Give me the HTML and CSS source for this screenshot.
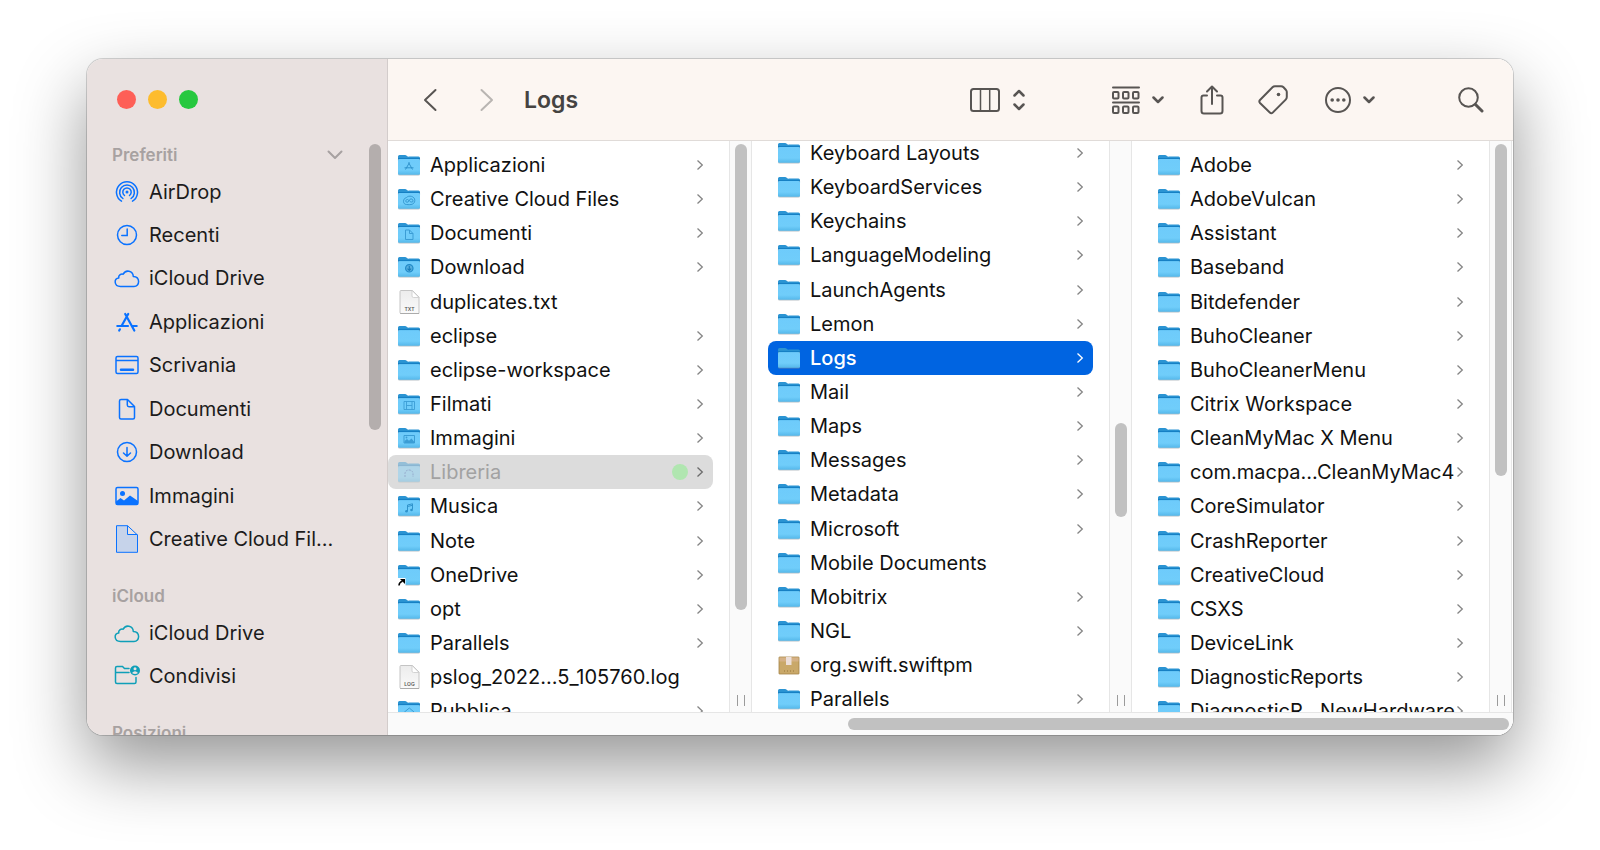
FILE: index.html
```html
<!DOCTYPE html>
<html lang="it">
<head>
    <meta charset="UTF-8">
    <meta name="viewport" content="width=device-width, initial-scale=1.0">
    <title>Logs</title>
    <link rel="stylesheet" href="styles.css">
</head>
<body>
    <!-- Shared icons -->
    <svg class="defs" aria-hidden="true">
        <defs>
            <linearGradient id="folder-front" x1="0" y1="0" x2="0" y2="1">
                <stop offset="0" stop-color="#6ecbfb"/>
                <stop offset="0.7" stop-color="#70cdfa"/>
                <stop offset="1" stop-color="#55b8ea"/>
            </linearGradient>
            <linearGradient id="page-fill" x1="0" y1="0" x2="0" y2="1">
                <stop offset="0" stop-color="#ececec"/>
                <stop offset="1" stop-color="#fafafa"/>
            </linearGradient>
        </defs>
        <symbol id="folder" viewBox="0 0 24 24">
            <path d="M1 3.500Q1 2 2.500 2H8Q9 2 10 3T12 3.500H21.500Q23 3.500 23 5V20H1Z" fill="#2b94d3"/>
            <rect x="1" y="5" width="22" height="17.500" rx="1.500" fill="#8a98a0" opacity="0.6"/>
            <rect x="1" y="6" width="22" height="15.800" rx="1.500" fill="url(#folder-front)"/>
            <path d="M1 5.500H23" stroke="#1680c4" stroke-width="1.200"/>
        </symbol>
        <symbol id="file" viewBox="0 0 24 24">
            <path d="M4 0.500H15.500L22 7V23.500H4Q3 23.500 3 22.500V1.500Q3 0.500 4 0.500Z" fill="url(#page-fill)" stroke="#c4c4c4"/>
            <path d="M15 0.500V6Q15 7.500 16.500 7.500H22Z" fill="#fff" stroke="#c9c9c9" stroke-width="0.800"/>
            <path d="M3 23.700H22" stroke="#9a9a9a" stroke-width="0.700"/>
        </symbol>
        <symbol id="box" viewBox="0 0 24 24">
            <rect x="2" y="4" width="20" height="17" rx="0.500" fill="#c9a869" stroke="#a58346" stroke-width="0.800"/>
            <rect x="2.500" y="4.500" width="19" height="4" fill="#d5b186"/>
            <rect x="9" y="4" width="5.500" height="8" fill="#ecdfda"/>
            <path d="M7 18H17" stroke="#96763c" stroke-dasharray="1 2"/>
        </symbol>
        <symbol id="g-apps" viewBox="0 0 24 24"><path d="M12.500 9.500L8.500 16.500M11.500 9.500L15.500 16.500M7.500 14.800H16.500" fill="none" stroke="#2f93cc"/></symbol>
        <symbol id="g-cc" viewBox="0 0 24 24"><path d="M9.500 17.500C5.500 17.500 5.500 11.500 9.500 10.500C11.500 8 18 9 17.800 13.500C17.600 17.500 14 18 9.500 17.500M15.500 15C13 16 12 12.500 10.500 12.500C8.500 12.500 8 15 10 15.300C12 15.500 12 12 14 11.800C16 12 16.500 14 15.500 15" fill="none" stroke="#2f93cc" stroke-width="0.900"/></symbol>
        <symbol id="g-doc" viewBox="0 0 24 24"><path d="M8.500 9H12.500L16 12.500V18.500H8.500ZM12.500 9V12.500H16" fill="none" stroke="#3b9dd5"/></symbol>
        <symbol id="g-down" viewBox="0 0 24 24"><circle cx="12.300" cy="13.300" r="3.700" fill="#56aede" stroke="#2189c7" stroke-width="1.200"/><path d="M12.300 11V15.300M10.500 13.700L12.300 15.500L14.100 13.700" fill="none" stroke="#1a7dba" stroke-width="1.100"/></symbol>
        <symbol id="g-film" viewBox="0 0 24 24"><path d="M7 9.500H17.500V17.500H7ZM9.500 9.500V17.500M15 9.500V17.500M9.500 13.500H15" fill="none" stroke="#3b9dd5" stroke-width="0.900"/></symbol>
        <symbol id="g-image" viewBox="0 0 24 24"><path d="M7 9.500H17.500V17H7Z" fill="none" stroke="#3b9dd5"/><path d="M7.500 17V15L10 13L12 14.800L14.500 12.500L17 15.500V17Z" fill="#3b9dd5"/><circle cx="9.500" cy="11.500" r="0.900" fill="#3b9dd5"/></symbol>
        <symbol id="g-lib" viewBox="0 0 24 24"><path d="M8 17V13.500Q8.500 10 12 10T16 13.500V17" fill="none" stroke="#2f63b8" stroke-dasharray="2 1"/></symbol>
        <symbol id="g-music" viewBox="0 0 24 24"><path d="M10.500 17V11L15.500 9.800V15.500M10.500 12.500L15.500 11.300" fill="none" stroke="#2f93cc"/><circle cx="9.500" cy="17.300" r="1.300" fill="#2f93cc"/><circle cx="14.500" cy="16" r="1.300" fill="#2f93cc"/></symbol>
        <symbol id="g-public" viewBox="0 0 24 24"><path d="M7.500 13L12.300 9L17 13L12.300 17Z" fill="none" stroke="#3b9dd5"/></symbol>
        <symbol id="g-alias" viewBox="0 0 24 24"><rect x="1" y="15" width="7.500" height="8.500" fill="#fff"/><path d="M2 22.500Q2 19.500 5.500 18" fill="none" stroke="#000" stroke-width="1.500"/><path d="M3 16H8V21Z" fill="#000"/></symbol>
        <symbol id="chev" viewBox="0 0 8 12"><path d="M1.500 1.500L6.300 6L1.500 10.500" fill="none" stroke="currentColor" stroke-width="1.300"/></symbol>
        <symbol id="down" viewBox="0 0 12 8"><path d="M1.500 1.500L6 6L10.500 1.500" fill="none" stroke="currentColor" stroke-width="2.500" stroke-linecap="round" stroke-linejoin="round"/></symbol>
        <symbol id="cloud" viewBox="0 0 26 26"><path d="M6.500 21.500C-0.300 21.500 -0.300 13 4.800 13C4 10.500 7 8.300 9.200 9.200C11.500 4.300 19 5.500 19.300 11.500C26.500 11.800 26 21.500 20 21.500Z" fill="none" stroke="currentColor" stroke-width="1.500" stroke-linejoin="round"/></symbol>
    </svg>

    <main class="window">
        <nav class="sidebar">
            <div class="lights">
                <button class="light red" aria-label="Chiudi"></button>
                <button class="light yellow" aria-label="Riduci"></button>
                <button class="light green" aria-label="Ingrandisci"></button>
            </div>
            <div class="sidebar-body">
                <div class="places">
                    <h2>Preferiti
                        <svg width="16" height="10" viewBox="0 0 16 10"><path d="M1.500 1.500L8 8L14.500 1.500" fill="none" stroke="currentColor" stroke-width="2" stroke-linecap="round" stroke-linejoin="round"/></svg>
                    </h2>
                    <ul>
                        <li><a href="#">
                            <svg viewBox="0 0 26 26" fill="none" stroke="currentColor" stroke-width="1.500" stroke-linecap="round"><circle cx="13" cy="13" r="1.500" fill="currentColor" stroke="none"/><path d="M10.500 16.500A4.200 4.200 0 1 1 15.500 16.500M8.900 19.500A7.400 7.400 0 1 1 17.100 19.500M7.500 22.200A10.500 10.500 0 1 1 18.500 22.200"/></svg>
                            AirDrop</a></li>
                        <li><a href="#">
                            <svg viewBox="0 0 26 26" fill="none" stroke="currentColor" stroke-width="1.500" stroke-linecap="round"><circle cx="13" cy="13" r="9.500"/><path d="M13.200 7V13.500H7.800"/></svg>
                            Recenti</a></li>
                        <li><a href="#">
                            <svg><use href="#cloud"/></svg>
                            iCloud Drive</a></li>
                        <li><a href="#">
                            <svg viewBox="0 0 26 26" fill="none" stroke="currentColor" stroke-width="2.200" stroke-linecap="round"><path d="M14.200 5L7.800 16.500M11.200 5L20.300 21.500M3.300 17H14M18.500 17H22.700M5.900 20.300L5.200 21.500"/></svg>
                            Applicazioni</a></li>
                        <li><a href="#">
                            <svg viewBox="0 0 26 26" fill="none" stroke="currentColor" stroke-width="1.500"><rect x="2" y="4.500" width="22" height="17" rx="1.500"/><path d="M2 8.500H24"/><path d="M7 17.800H19" stroke-width="2.500" stroke-linecap="round"/></svg>
                            Scrivania</a></li>
                        <li><a href="#">
                            <svg viewBox="0 0 26 26" fill="none" stroke="currentColor" stroke-width="1.500" stroke-linejoin="round"><path d="M7 3.500H13.500L20.500 10.500V21.500Q20.500 23 19 23H7Q5.500 23 5.500 21.500V5Q5.500 3.500 7 3.500ZM13.300 3.800V9Q13.300 10.700 15 10.700H20.300"/></svg>
                            Documenti</a></li>
                        <li><a href="#">
                            <svg viewBox="0 0 26 26" fill="none" stroke="currentColor" stroke-width="1.500" stroke-linecap="round" stroke-linejoin="round"><circle cx="13" cy="13" r="9.500"/><path d="M13 8.500V17M9.500 14L13 17.300L16.500 14"/></svg>
                            Download</a></li>
                        <li><a href="#">
                            <svg viewBox="0 0 26 26"><rect x="2" y="4.500" width="22" height="17" rx="1.500" fill="none" stroke="currentColor" stroke-width="1.500"/><path d="M2 18.500L6.500 15L10 17.500L16 12.500L24 18V21.500H2Z" fill="currentColor"/><circle cx="8.500" cy="10.500" r="2.500" fill="currentColor"/></svg>
                            Immagini</a></li>
                        <li><a href="#">
                            <svg viewBox="0 0 26 28"><path d="M2.500 0.700H13.500L23.500 10.500V27.300H2.500Z" fill="#c6d3ea"/><path d="M13.500 0.700L23.500 9.500H13.500Z" fill="#e9e1e0"/><path d="M2.500 0.700H13.500L23.500 10V27.300H2.500ZM13.500 0.700V9.500H23.500" fill="none" stroke="currentColor"/></svg>
                            Creative Cloud Fil...</a></li>
                    </ul>
                    <h2>iCloud</h2>
                    <ul class="teal">
                        <li><a href="#">
                            <svg><use href="#cloud"/></svg>
                            iCloud Drive</a></li>
                        <li><a href="#">
                            <svg viewBox="0 0 26 26"><path d="M15 5.500H10.500L8.500 3.500H3Q1.500 3.500 1.500 5V19Q1.500 20.500 3 20.500H20.500Q22 20.500 22 19V14.500M1.500 9.500H15" fill="none" stroke="currentColor" stroke-width="1.500" stroke-linecap="round"/><circle cx="21" cy="7.500" r="5" fill="currentColor"/><circle cx="21" cy="5.700" r="1.500" fill="#e9e1e0"/><path d="M18 10Q21 6.500 24 10Q21 12 18 10Z" fill="#e9e1e0"/></svg>
                            Condivisi</a></li>
                    </ul>
                    <h2>Posizioni</h2>
                </div>
                <div class="thumb thumb-places"></div>
            </div>
        </nav>

        <section class="content">
            <header class="toolbar">
                <div class="nav-buttons">
                    <button aria-label="Indietro"><svg width="14" height="24" viewBox="0 0 14 24"><path d="M12.500 2L2 12L12.500 22"/></svg></button>
                    <button class="dim" aria-label="Avanti"><svg width="14" height="24" viewBox="0 0 14 24"><path d="M1.500 2L12 12L1.500 22"/></svg></button>
                </div>
                <h1>Logs</h1>
                <div class="tools">
                    <button class="tool-view" aria-label="Vista">
                        <svg width="30" height="26" viewBox="0 0 30 26"><rect x="1" y="2" width="28" height="22" rx="2.500"/><path d="M10.500 2V24M19.700 2V24" stroke-width="1.500"/></svg>
                        <svg width="12" height="22" viewBox="0 0 12 22"><path d="M1.500 6.500L6 2L10.500 6.500M1.500 15.500L6 20L10.500 15.500" stroke-width="2.500"/></svg>
                    </button>
                    <button class="tool-group" aria-label="Raggruppa">
                        <svg width="28" height="28" viewBox="0 0 28 28"><path d="M1 1.500H27M1 16.500H27"/><rect x="1" y="6" width="5.500" height="6.500" rx="1"/><rect x="11" y="6" width="5.500" height="6.500" rx="1"/><rect x="21" y="6" width="5.500" height="6.500" rx="1"/><rect x="1" y="20.500" width="5.500" height="6.500" rx="1"/><rect x="11" y="20.500" width="5.500" height="6.500" rx="1"/><rect x="21" y="20.500" width="5.500" height="6.500" rx="1"/></svg>
                        <svg width="12" height="8"><use href="#down"/></svg>
                    </button>
                    <button class="tool-share" aria-label="Condividi">
                        <svg width="24" height="30" viewBox="0 0 24 30"><path d="M7 10.500H3.500Q1.500 10.500 1.500 12.500V26Q1.500 28.500 4 28.500H20Q22.500 28.500 22.500 26V12.500Q22.500 10.500 20.500 10.500H17M12 19V2M7 6.500L12 1.500L17 6.500"/></svg>
                    </button>
                    <button class="tool-tag" aria-label="Tag">
                        <svg width="30" height="30" viewBox="0 0 30 30"><path d="M14.500 2.300Q15.500 1.300 17 1.300H23Q24.500 1.300 25.500 2.300L28 5Q28.800 6 28.800 7V12Q28.800 13.500 27.700 14.600L14.700 27.600Q13.300 29 11.800 27.500L2 18Q0.700 16.500 2 15Z"/><circle cx="20.500" cy="9.500" r="1.800" fill="currentColor" stroke="none"/></svg>
                    </button>
                    <button class="tool-more" aria-label="Azioni">
                        <svg width="26" height="26" viewBox="0 0 26 26"><circle cx="13" cy="13" r="12"/><g fill="currentColor" stroke="none"><circle cx="7.200" cy="13" r="1.800"/><circle cx="13" cy="13" r="1.800"/><circle cx="18.800" cy="13" r="1.800"/></g></svg>
                        <svg width="12" height="8"><use href="#down"/></svg>
                    </button>
                    <button aria-label="Cerca">
                        <svg width="26" height="26" viewBox="0 0 26 26"><circle cx="10.500" cy="10.500" r="9.300"/><path d="M17.500 17.500L24 24" stroke-width="3"/></svg>
                    </button>
                </div>
            </header>

            <div class="columns">
                <div class="column column-first">
                    <ul class="list">
                        <li><a href="#"><svg><use href="#folder"/><use href="#g-apps"/></svg><span>Applicazioni</span><svg class="chev"><use href="#chev"/></svg></a></li>
                        <li><a href="#"><svg><use href="#folder"/><use href="#g-cc"/></svg><span>Creative Cloud Files</span><svg class="chev"><use href="#chev"/></svg></a></li>
                        <li><a href="#"><svg><use href="#folder"/><use href="#g-doc"/></svg><span>Documenti</span><svg class="chev"><use href="#chev"/></svg></a></li>
                        <li><a href="#"><svg><use href="#folder"/><use href="#g-down"/></svg><span>Download</span><svg class="chev"><use href="#chev"/></svg></a></li>
                        <li><a href="#"><svg viewBox="0 0 24 24"><use href="#file"/><text x="12.500" y="20.500">TXT</text></svg><span>duplicates.txt</span></a></li>
                        <li><a href="#"><svg><use href="#folder"/></svg><span>eclipse</span><svg class="chev"><use href="#chev"/></svg></a></li>
                        <li><a href="#"><svg><use href="#folder"/></svg><span>eclipse-workspace</span><svg class="chev"><use href="#chev"/></svg></a></li>
                        <li><a href="#"><svg><use href="#folder"/><use href="#g-film"/></svg><span>Filmati</span><svg class="chev"><use href="#chev"/></svg></a></li>
                        <li><a href="#"><svg><use href="#folder"/><use href="#g-image"/></svg><span>Immagini</span><svg class="chev"><use href="#chev"/></svg></a></li>
                        <li><a href="#" class="open"><svg><use href="#folder"/><use href="#g-lib"/></svg><span>Libreria</span><i class="dot"></i><svg class="chev"><use href="#chev"/></svg></a></li>
                        <li><a href="#"><svg><use href="#folder"/><use href="#g-music"/></svg><span>Musica</span><svg class="chev"><use href="#chev"/></svg></a></li>
                        <li><a href="#"><svg><use href="#folder"/></svg><span>Note</span><svg class="chev"><use href="#chev"/></svg></a></li>
                        <li><a href="#"><svg><use href="#folder"/><use href="#g-alias"/></svg><span>OneDrive</span><svg class="chev"><use href="#chev"/></svg></a></li>
                        <li><a href="#"><svg><use href="#folder"/></svg><span>opt</span><svg class="chev"><use href="#chev"/></svg></a></li>
                        <li><a href="#"><svg><use href="#folder"/></svg><span>Parallels</span><svg class="chev"><use href="#chev"/></svg></a></li>
                        <li><a href="#"><svg viewBox="0 0 24 24"><use href="#file"/><text x="12.500" y="20.500">LOG</text></svg><span>pslog_2022...5_105760.log</span></a></li>
                        <li><a href="#"><svg><use href="#folder"/><use href="#g-public"/></svg><span>Pubblica</span><svg class="chev"><use href="#chev"/></svg></a></li>
                    </ul>
                    <div class="track"><div class="thumb thumb-first"></div><div class="grip"></div></div>
                </div>

                <div class="column column-scrolled">
                    <ul class="list">
                        <li><a href="#"><svg><use href="#folder"/></svg><span>Keyboard Layouts</span><svg class="chev"><use href="#chev"/></svg></a></li>
                        <li><a href="#"><svg><use href="#folder"/></svg><span>KeyboardServices</span><svg class="chev"><use href="#chev"/></svg></a></li>
                        <li><a href="#"><svg><use href="#folder"/></svg><span>Keychains</span><svg class="chev"><use href="#chev"/></svg></a></li>
                        <li><a href="#"><svg><use href="#folder"/></svg><span>LanguageModeling</span><svg class="chev"><use href="#chev"/></svg></a></li>
                        <li><a href="#"><svg><use href="#folder"/></svg><span>LaunchAgents</span><svg class="chev"><use href="#chev"/></svg></a></li>
                        <li><a href="#"><svg><use href="#folder"/></svg><span>Lemon</span><svg class="chev"><use href="#chev"/></svg></a></li>
                        <li><a href="#" class="selected"><svg><use href="#folder"/></svg><span>Logs</span><svg class="chev"><use href="#chev"/></svg></a></li>
                        <li><a href="#"><svg><use href="#folder"/></svg><span>Mail</span><svg class="chev"><use href="#chev"/></svg></a></li>
                        <li><a href="#"><svg><use href="#folder"/></svg><span>Maps</span><svg class="chev"><use href="#chev"/></svg></a></li>
                        <li><a href="#"><svg><use href="#folder"/></svg><span>Messages</span><svg class="chev"><use href="#chev"/></svg></a></li>
                        <li><a href="#"><svg><use href="#folder"/></svg><span>Metadata</span><svg class="chev"><use href="#chev"/></svg></a></li>
                        <li><a href="#"><svg><use href="#folder"/></svg><span>Microsoft</span><svg class="chev"><use href="#chev"/></svg></a></li>
                        <li><a href="#"><svg><use href="#folder"/></svg><span>Mobile Documents</span></a></li>
                        <li><a href="#"><svg><use href="#folder"/></svg><span>Mobitrix</span><svg class="chev"><use href="#chev"/></svg></a></li>
                        <li><a href="#"><svg><use href="#folder"/></svg><span>NGL</span><svg class="chev"><use href="#chev"/></svg></a></li>
                        <li><a href="#"><svg><use href="#box"/></svg><span>org.swift.swiftpm</span></a></li>
                        <li><a href="#"><svg><use href="#folder"/></svg><span>Parallels</span><svg class="chev"><use href="#chev"/></svg></a></li>
                    </ul>
                    <div class="track"><div class="thumb thumb-second"></div><div class="grip"></div></div>
                </div>

                <div class="column">
                    <ul class="list">
                        <li><a href="#"><svg><use href="#folder"/></svg><span>Adobe</span><svg class="chev"><use href="#chev"/></svg></a></li>
                        <li><a href="#"><svg><use href="#folder"/></svg><span>AdobeVulcan</span><svg class="chev"><use href="#chev"/></svg></a></li>
                        <li><a href="#"><svg><use href="#folder"/></svg><span>Assistant</span><svg class="chev"><use href="#chev"/></svg></a></li>
                        <li><a href="#"><svg><use href="#folder"/></svg><span>Baseband</span><svg class="chev"><use href="#chev"/></svg></a></li>
                        <li><a href="#"><svg><use href="#folder"/></svg><span>Bitdefender</span><svg class="chev"><use href="#chev"/></svg></a></li>
                        <li><a href="#"><svg><use href="#folder"/></svg><span>BuhoCleaner</span><svg class="chev"><use href="#chev"/></svg></a></li>
                        <li><a href="#"><svg><use href="#folder"/></svg><span>BuhoCleanerMenu</span><svg class="chev"><use href="#chev"/></svg></a></li>
                        <li><a href="#"><svg><use href="#folder"/></svg><span>Citrix Workspace</span><svg class="chev"><use href="#chev"/></svg></a></li>
                        <li><a href="#"><svg><use href="#folder"/></svg><span>CleanMyMac X Menu</span><svg class="chev"><use href="#chev"/></svg></a></li>
                        <li><a href="#"><svg><use href="#folder"/></svg><span>com.macpa...CleanMyMac4</span><svg class="chev"><use href="#chev"/></svg></a></li>
                        <li><a href="#"><svg><use href="#folder"/></svg><span>CoreSimulator</span><svg class="chev"><use href="#chev"/></svg></a></li>
                        <li><a href="#"><svg><use href="#folder"/></svg><span>CrashReporter</span><svg class="chev"><use href="#chev"/></svg></a></li>
                        <li><a href="#"><svg><use href="#folder"/></svg><span>CreativeCloud</span><svg class="chev"><use href="#chev"/></svg></a></li>
                        <li><a href="#"><svg><use href="#folder"/></svg><span>CSXS</span><svg class="chev"><use href="#chev"/></svg></a></li>
                        <li><a href="#"><svg><use href="#folder"/></svg><span>DeviceLink</span><svg class="chev"><use href="#chev"/></svg></a></li>
                        <li><a href="#"><svg><use href="#folder"/></svg><span>DiagnosticReports</span><svg class="chev"><use href="#chev"/></svg></a></li>
                        <li><a href="#"><svg><use href="#folder"/></svg><span>DiagnosticR...NewHardware</span><svg class="chev"><use href="#chev"/></svg></a></li>
                    </ul>
                    <div class="track"><div class="thumb thumb-third"></div><div class="grip"></div></div>
                </div>
            </div>

            <div class="bottom-bar"><div class="thumb-h"></div></div>
        </section>
    </main>
</body>
</html>
```
FILE: styles.css
```css
* {
    box-sizing: border-box;
}
body {
    margin: 0;
    padding: 59px 87px 115px;
    height: 100vh;
    overflow: hidden;
    background-color: #fff;
    color: #111;
    font-family: Inter, "Liberation Sans", sans-serif;
    font-size: 20px;
}
ul {
    list-style: none;
    margin: 0;
    padding: 0;
}
a {
    color: inherit;
    text-decoration: none;
}
button {
    display: flex;
    align-items: center;
    padding: 0;
    border: 0;
    background: none;
    color: inherit;
}
.defs {
    position: absolute;
    width: 0;
    height: 0;
}

/* window */
.window {
    display: flex;
    height: 100%;
    border-radius: 16px;
    overflow: hidden;
    box-shadow: 0 0 0 1px rgba(0, 0, 0, 0.16), 0 30px 70px rgba(0, 0, 0, 0.42);
}

/* sidebar */
.sidebar {
    display: flex;
    flex-direction: column;
    flex: 0 0 301px;
    background-color: #e9e1e0;
    border-right: 1px solid #d3cccb;
}
.lights {
    display: flex;
    align-items: center;
    gap: 12px;
    flex: 0 0 81px;
    padding-left: 30px;
}
.light {
    width: 19px;
    height: 19px;
    border-radius: 50%;
}
.red {
    background-color: #fe5f57;
}
.yellow {
    background-color: #fdbc2e;
}
.green {
    background-color: #27c83f;
}
.sidebar-body {
    display: flex;
    flex: 1;
    min-height: 0;
    padding: 0 6px 0 25px;
}
.places {
    flex: 1;
}
.places h2 {
    display: flex;
    align-items: center;
    justify-content: space-between;
    height: 30px;
    margin: 0;
    padding-right: 26px;
    color: #a7a1a1;
    font-size: 17px;
    font-weight: 600;
}
.places ul {
    margin-bottom: 21px;
}
.places li:nth-child(2n+3) {
    margin-bottom: 1px;
}
.places a {
    display: flex;
    align-items: center;
    gap: 9px;
    height: 43px;
    padding-left: 2px;
    color: #1c1b1b;
    white-space: nowrap;
}
.places a svg {
    flex-shrink: 0;
    width: 26px;
    height: 28px;
    color: #0a72ff;
    overflow: visible;
}
.places .teal svg {
    color: #0f9fb8;
}

/* scroll bars */
.thumb {
    width: 12px;
    border-radius: 6px;
    background-color: #c1c1c1;
}
.thumb-places {
    height: 48%;
    margin-top: 4px;
    background-color: #b4aead;
}
.thumb-first {
    height: 83%;
}
.thumb-second {
    height: 94px;
    margin-top: 279px;
}
.thumb-third {
    height: 59%;
}
.track {
    display: flex;
    flex-direction: column;
    align-items: center;
    flex: 0 0 23px;
    padding: 3px 0 6px;
    border: solid #e6e6e6;
    border-width: 0 1px;
    background-color: #fafafa;
}
.grip {
    width: 8px;
    height: 11px;
    margin-top: auto;
    border: solid #9b9b9b;
    border-width: 0 1px;
}

/* toolbar */
.content {
    display: flex;
    flex-direction: column;
    flex: 1;
    min-width: 0;
    background-color: #fff;
}
.toolbar {
    display: flex;
    align-items: center;
    flex: 0 0 82px;
    padding: 0 29px 0 35px;
    border-bottom: 1px solid #e0dbd8;
    background-color: #fcf6f2;
    color: #585553;
}
.toolbar svg {
    fill: none;
    stroke: currentColor;
    stroke-width: 2px;
    stroke-linecap: round;
    stroke-linejoin: round;
}
.nav-buttons {
    display: flex;
    gap: 43px;
}
.dim {
    color: #b9b5b2;
}
.toolbar h1 {
    margin: 0 0 0 30px;
    color: #454341;
    font-size: 23px;
    font-weight: 600;
}
.tools {
    display: flex;
    align-items: center;
    margin-left: auto;
}
.tools button {
    gap: 12px;
}
.tools .tool-view {
    gap: 13px;
    margin-right: 87px;
}
.tool-group {
    margin-right: 36px;
}
.tool-share {
    margin-right: 34px;
}
.tool-tag {
    margin-right: 37px;
}
.tool-more {
    margin-right: 83px;
}

/* columns */
.columns {
    display: flex;
    flex: 1;
    min-height: 0;
    padding-right: 1px;
}
.column {
    display: flex;
    flex: 380 1 0;
    min-width: 0;
    overflow: hidden;
}
.column-first {
    flex-grow: 364;
}
.list {
    flex: 1;
    min-width: 0;
    padding: 7px 16px 0;
}
.column-first .list {
    padding-left: 0;
}
.column-scrolled .list {
    margin-top: -12px;
}
/* an extra pixel every seventh row */
.list li:nth-child(7n+4) {
    margin-bottom: 1px;
}
.list a {
    display: flex;
    align-items: center;
    height: 34px;
    padding: 0 9px;
    border-radius: 8px;
    color: #111;
    white-space: nowrap;
}
.list svg {
    flex-shrink: 0;
    width: 24px;
    height: 24px;
}
.list span {
    flex: 1;
    margin-left: 9px;
}
.list text {
    fill: #555;
    font-size: 5px;
    font-weight: 600;
    text-anchor: middle;
}
.list .chev {
    width: 8px;
    height: 12px;
    color: #858585;
}
.list .open {
    background-color: #dcdcdc;
    color: #a2a2a2;
}
.open svg:first-child {
    opacity: 0.4;
}
.list .open .chev {
    color: #6b6b6b;
}
.dot {
    width: 16px;
    height: 16px;
    margin-right: 8px;
    border-radius: 50%;
    background-color: #b0e6b0;
}
.list .selected {
    background-color: #0064e1;
    color: #fff;
    font-weight: 500;
}
.list .selected .chev {
    color: #fff;
}
.bottom-bar {
    display: flex;
    align-items: center;
    justify-content: flex-end;
    flex: 0 0 23px;
    padding-right: 4px;
    border-top: 1px solid #e6e6e6;
    background-color: #fafafa;
}
.thumb-h {
    width: 59%;
    height: 12px;
    border-radius: 6px;
    background-color: #c1c1c1;
}
```
